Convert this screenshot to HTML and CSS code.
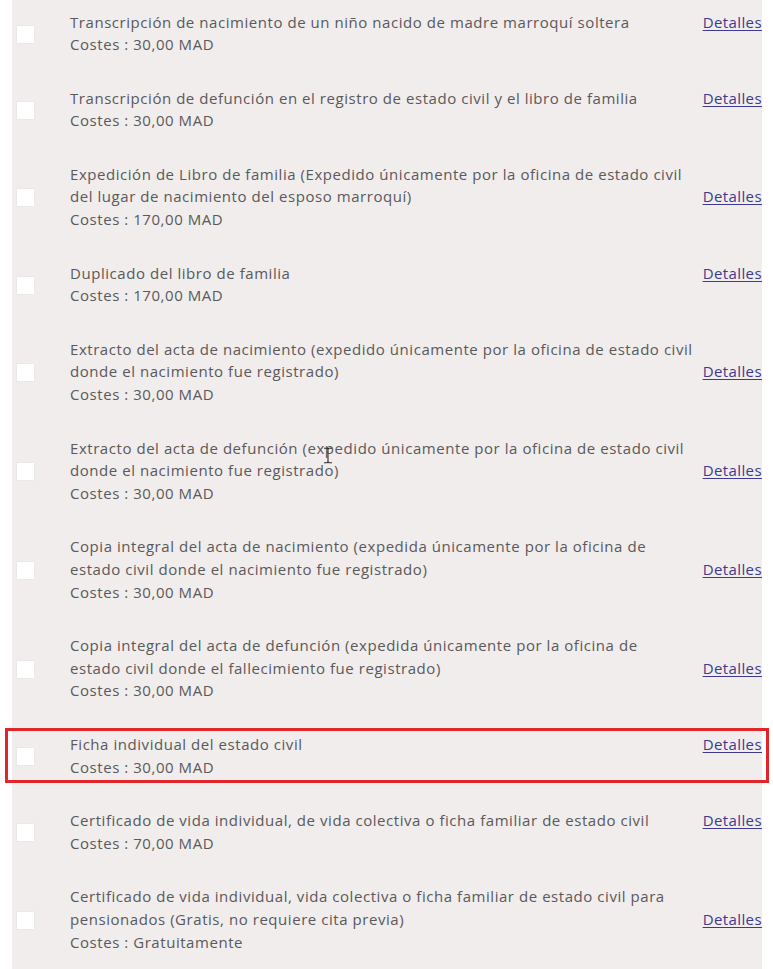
FILE: index.html
```html
<!DOCTYPE html>
<html lang="es">
<head>
<meta charset="utf-8">
<link rel="stylesheet" href="styles.css">
</head>
<body>
<div class="page">
  <div class="panel">
    <div class="row">
      <span class="check"></span>
      <div class="content">
        <div class="head"><p class="title">Transcripción de nacimiento de un niño nacido de madre marroquí soltera</p><a class="link" href="#">Detalles</a></div>
        <p class="cost">Costes : 30,00 MAD</p>
      </div>
    </div>
    <div class="row">
      <span class="check"></span>
      <div class="content">
        <div class="head"><p class="title">Transcripción de defunción en el registro de estado civil y el libro de familia</p><a class="link" href="#">Detalles</a></div>
        <p class="cost">Costes : 30,00 MAD</p>
      </div>
    </div>
    <div class="row">
      <span class="check"></span>
      <div class="content">
        <div class="head"><p class="title">Expedición de Libro de familia (Expedido únicamente por la oficina de estado&nbsp;civil del lugar de nacimiento del esposo marroquí)</p><a class="link" href="#">Detalles</a></div>
        <p class="cost">Costes : 170,00 MAD</p>
      </div>
    </div>
    <div class="row">
      <span class="check"></span>
      <div class="content">
        <div class="head"><p class="title">Duplicado del libro de familia</p><a class="link" href="#">Detalles</a></div>
        <p class="cost">Costes : 170,00 MAD</p>
      </div>
    </div>
    <div class="row">
      <span class="check"></span>
      <div class="content">
        <div class="head"><p class="title">Extracto del acta de nacimiento (expedido únicamente por la oficina de estado&nbsp;civil donde el nacimiento fue registrado)</p><a class="link" href="#">Detalles</a></div>
        <p class="cost">Costes : 30,00 MAD</p>
      </div>
    </div>
    <div class="row">
      <span class="check"></span>
      <div class="content">
        <div class="head"><p class="title">Extracto del acta de defunción (expedido únicamente por la oficina de estado&nbsp;civil donde el nacimiento fue registrado)</p><a class="link" href="#">Detalles</a></div>
        <p class="cost">Costes : 30,00 MAD</p>
      </div>
      <svg class="cursor" width="10" height="17" viewBox="0 0 10 17" aria-hidden="true">
        <path d="M1 1.2 H4.2 M5.8 1.2 H9 M4.2 1.2 Q5 1.6 5 3 V14 Q5 15.4 4.2 15.8 M5.8 1.2 Q5 1.6 5 3 M5 14 Q5 15.4 5.8 15.8 M1 15.8 H4.2 M5.8 15.8 H9" fill="none" stroke="#2e2e2e" stroke-width="1.1"/>
      </svg>
    </div>
    <div class="row">
      <span class="check"></span>
      <div class="content">
        <div class="head"><p class="title">Copia integral del acta de nacimiento (expedida únicamente por la oficina de estado&nbsp;civil donde el nacimiento fue registrado)</p><a class="link" href="#">Detalles</a></div>
        <p class="cost">Costes : 30,00 MAD</p>
      </div>
    </div>
    <div class="row">
      <span class="check"></span>
      <div class="content">
        <div class="head"><p class="title">Copia integral del acta de defunción (expedida únicamente por la oficina de estado&nbsp;civil donde el fallecimiento fue registrado)</p><a class="link" href="#">Detalles</a></div>
        <p class="cost">Costes : 30,00 MAD</p>
      </div>
    </div>
    <div class="row">
      <span class="check"></span>
      <div class="content">
        <div class="head"><p class="title">Ficha individual del estado civil</p><a class="link" href="#">Detalles</a></div>
        <p class="cost">Costes : 30,00 MAD</p>
      </div>
      <span class="highlight"></span>
    </div>
    <div class="row">
      <span class="check"></span>
      <div class="content">
        <div class="head"><p class="title">Certificado de vida individual, de vida colectiva o ficha familiar de estado civil</p><a class="link" href="#">Detalles</a></div>
        <p class="cost">Costes : 70,00 MAD</p>
      </div>
    </div>
    <div class="row">
      <span class="check"></span>
      <div class="content">
        <div class="head"><p class="title">Certificado de vida individual, vida colectiva o ficha familiar de estado&nbsp;civil para pensionados (Gratis, no requiere cita previa)</p><a class="link" href="#">Detalles</a></div>
        <p class="cost">Costes : Gratuitamente</p>
      </div>
    </div>
  </div>
</div>
</body>
</html>
```

FILE: styles.css
```css
html, body {
  margin: 0;
  padding: 0;
  background: #ffffff;
}
body {
  font-family: "Open Sans", "Liberation Sans", sans-serif;
  font-size: 15px;
  letter-spacing: 0.55px;
  color: #5a595b;
}
.page {
  width: 773px;
  height: 969px;
  overflow: hidden;
}
.panel {
  margin: -5px 0 0 12px;
  width: 750px;
  padding: 0 0 0 4px;
  box-sizing: border-box;
  background: #f0edec;
}
.row {
  position: relative;
  display: flex;
  align-items: center;
  padding: 15.5px 0;
}
.check {
  flex: none;
  width: 19px;
  height: 19px;
  background: #ffffff;
  border: 1px solid #ebe9e8;
  box-sizing: border-box;
  border-radius: 1px;
  margin-top: 2px;
}
.content {
  flex: 1;
  margin-left: 35px;
  min-width: 0;
}
.head {
  display: flex;
  align-items: last baseline;
  justify-content: space-between;
}
.title, .cost {
  margin: 0;
  line-height: 22.6px;
}
.title {
  width: 632px;
}
.link {
  color: #3d3a90;
  text-decoration: underline;
  text-decoration-thickness: 1px;
  text-underline-offset: 2px;
  line-height: 22.6px;
  white-space: nowrap;
  letter-spacing: 0.4px;
}
.highlight {
  position: absolute;
  left: -11px;
  right: -7px;
  top: 11px;
  bottom: 11px;
  border: 3px solid #e0262a;
  pointer-events: none;
}
.cursor {
  position: absolute;
  left: 307px;
  top: 26px;
}
```
